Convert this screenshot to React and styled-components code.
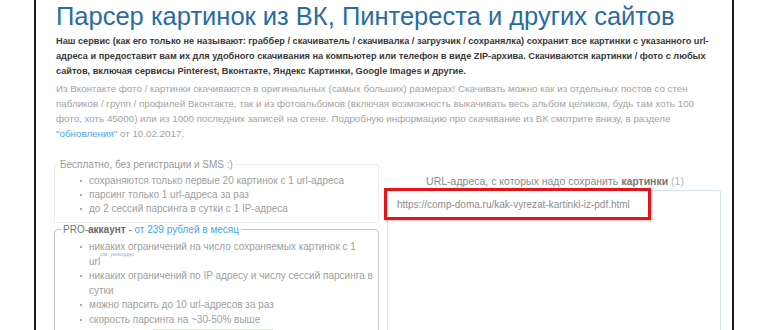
import React from "react";
import styled, { createGlobalStyle } from "styled-components";

const GlobalStyle = createGlobalStyle`
  html, body {
    margin: 0;
    background: #fff;
    font-family: "Liberation Sans", Arial, sans-serif;
  }
`;

const Page = styled.div`
  box-sizing: border-box;
  width: 700px;
  height: 330px;
  margin-left: 34px;
  border-left: 2px solid #1e1e1e;
  border-right: 2px solid #1e1e1e;
  padding: 2px 10px 0 20px;
  overflow: hidden;
`;

const Title = styled.h1`
  margin: 0;
  font-size: 25.5px;
  line-height: 29px;
  font-weight: normal;
  color: #286ca2;
  white-space: nowrap;
`;

const Intro = styled.p`
  margin: 3px 0 0;
  font-size: 9.2px;
  line-height: 15px;
  font-weight: bold;
  color: #3a3a3a;
  white-space: nowrap;
`;

const Note = styled.p`
  margin: 2px 0 0;
  font-size: 9.8px;
  line-height: 15px;
  color: #a3a3a3;
  white-space: nowrap;
`;

const Link = styled.span`
  color: #4aa8e0;
`;

const Columns = styled.div`
  display: grid;
  grid-template-columns: 325px 340px;
  column-gap: 3px;
  margin: 17px 0 0 -2px;
`;

const Left = styled.div`
  display: flex;
  flex-direction: column;
  gap: 0;
`;

const Box = styled.fieldset`
  margin: 0;
  padding: 0 0 6px;
  border: 1px solid ${({ $pro }) => ($pro ? "#c4c4c4" : "#ececec")};
  border-radius: ${({ $pro }) => ($pro ? "4px" : "2px")};
  position: relative;
`;

const Legend = styled.legend`
  padding: 0 2px;
  margin-left: ${({ $pro }) => ($pro ? "6px" : "3px")};
  font-size: 10px;
  line-height: 13px;
  color: ${({ $pro }) => ($pro ? "#777" : "#9a9a9a")};
`;

const Strong = styled.b`
  color: #6a6a6a;
`;

const List = styled.ul`
  margin: ${({ $pro }) => ($pro ? "4px" : "3px")} 0 0;
  padding: 0 0 0 34px;
  list-style: none;
`;

const Item = styled.li`
  position: relative;
  font-size: 10px;
  line-height: ${({ $tight }) => ($tight ? "14.5px" : "14px")};
  color: #a0a0a0;
  white-space: nowrap;

  &::before {
    content: "";
    position: absolute;
    left: -9px;
    top: 6px;
    width: 2px;
    height: 2px;
    background: #a8a8a8;
  }
`;

const Tiny = styled.span`
  position: absolute;
  left: 45px;
  top: 15px;
  font-size: 6px;
  color: #8fb4e0;
`;

const Right = styled.div`
  display: flex;
  flex-direction: column;
  align-items: stretch;
  padding-top: 17px;
`;

const FieldLabel = styled.div`
  text-align: center;
  font-size: 10.5px;
  line-height: 13px;
  color: #8a8a8a;
  padding-left: 6px;

  b {
    color: #777;
  }

  span {
    color: #b5b5b5;
  }
`;

const Area = styled.div`
  position: relative;
  margin: 2px 0 0 5px;
  width: 332px;
  height: 150px;
  border: 1px solid #d3e3ef;
  border-radius: 2px;
`;

const Highlight = styled.div`
  position: absolute;
  left: -4px;
  top: -3px;
  width: 251px;
  height: 26px;
  border: 3px solid #e3141c;
  box-shadow: 1px 1px 2px rgba(0, 0, 0, 0.25);
  display: flex;
  align-items: center;
  padding-left: 10px;
  font-size: 10px;
  color: #8e8e8e;
  white-space: nowrap;
`;

const BtnEdge = styled.div`
  margin: 2px 0 0 98px;
  width: 120px;
  height: 6px;
  border-top: 2px solid #d6ecc4;
`;

export default function App() {
  return (
    <>
      <GlobalStyle />
      <Page>
        <Title>Парсер картинок из ВК, Пинтереста и других сайтов</Title>
        <Intro>
          Наш сервис (как его только не называют: граббер / скачиватель / скачивалка / загрузчик / сохранялка) сохранит все картинки с указанного url-
          <br />
          адреса и предоставит вам их для удобного скачивания на компьютер или телефон в виде ZIP-архива. Скачиваются картинки / фото с любых
          <br />
          сайтов, включая сервисы Pinterest, Вконтакте, Яндекс Картинки, Google Images и другие.
        </Intro>
        <Note>
          Из Вконтакте фото / картинки скачиваются в оригинальных (самых больших) размерах! Скачивать можно как из отдельных постов со стен
          <br />
          пабликов / групп / профилей Вконтакте, так и из фотоальбомов (включая возможность выкачивать весь альбом целиком, будь там хоть 100
          <br />
          фото, хоть 45000) или из 1000 последних записей на стене. Подробную информацию про скачивание из ВК смотрите внизу, в разделе
          <br />
          <Link>"обновления"</Link> от 10.02.2017.
        </Note>
        <Columns>
          <Left>
            <Box>
              <Legend>Бесплатно, без регистрации и SMS :)</Legend>
              <List>
                <Item>сохраняются только первые 20 картинок с 1 url-адреса</Item>
                <Item>парсинг только 1 url-адреса за раз</Item>
                <Item>до 2 сессий парсинга в сутки с 1 IP-адреса</Item>
              </List>
            </Box>
            <Box $pro>
              <Legend $pro>
                PRO-<Strong>аккаунт</Strong> - <Link>от 239 рублей в месяц</Link>
              </Legend>
              <Tiny>см. рекорды</Tiny>
              <List $pro>
                <Item $tight>
                  никаких ограничений на число сохраняемых картинок с 1
                  <br />
                  url
                </Item>
                <Item $tight>
                  никаких ограничений по IP адресу и числу сессий парсинга в
                  <br />
                  сутки
                </Item>
                <Item $tight>можно парсить до 10 url-адресов за раз</Item>
                <Item $tight>скорость парсинга на ~30-50% выше</Item>
              </List>
              <BtnEdge />
            </Box>
          </Left>
          <Right>
            <FieldLabel>
              URL-адреса, с которых надо сохранить <b>картинки</b> <span>(1)</span>
            </FieldLabel>
            <Area>
              <Highlight>https://comp-doma.ru/kak-vyrezat-kartinki-iz-pdf.html</Highlight>
            </Area>
          </Right>
        </Columns>
      </Page>
    </>
  );
}
